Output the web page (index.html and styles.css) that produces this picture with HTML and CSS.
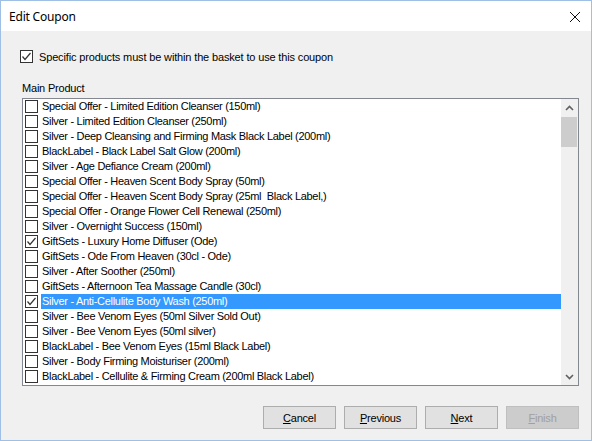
FILE: index.html
```html
<!DOCTYPE html>
<html>
<head>
<meta charset="utf-8">
<link rel="stylesheet" href="styles.css">
</head>
<body>
<div class="window">
  <div class="titlebar">
    <span class="title">Edit Coupon</span>
    <svg class="close" width="12" height="12" viewBox="0 0 12 12"><path d="M1 1 L11 11 M11 1 L1 11" stroke="#111" stroke-width="1" fill="none"/></svg>
  </div>
  <div class="content">
    <label class="topcheck">
      <span class="box checked"><svg width="11" height="11" viewBox="0 0 11 11"><polyline points="1.5,5.5 4,8.5 9.5,2" stroke="#333" stroke-width="1.2" fill="none"/></svg></span>
      <span>Specific products must be within the basket to use this coupon</span>
    </label>
    <div class="label">Main Product</div>
    <div class="listbox">
      <div class="items">
        <div class="row"><span class="box"></span><span class="txt">Special Offer - Limited Edition Cleanser (150ml)</span></div>
        <div class="row"><span class="box"></span><span class="txt">Silver - Limited Edition Cleanser (250ml)</span></div>
        <div class="row"><span class="box"></span><span class="txt">Silver - Deep Cleansing and Firming Mask Black Label (200ml)</span></div>
        <div class="row"><span class="box"></span><span class="txt">BlackLabel - Black Label Salt Glow (200ml)</span></div>
        <div class="row"><span class="box"></span><span class="txt">Silver - Age Defiance Cream (200ml)</span></div>
        <div class="row"><span class="box"></span><span class="txt">Special Offer - Heaven Scent Body Spray (50ml)</span></div>
        <div class="row"><span class="box"></span><span class="txt">Special Offer - Heaven Scent Body Spray (25ml&nbsp; Black Label,)</span></div>
        <div class="row"><span class="box"></span><span class="txt">Special Offer - Orange Flower Cell Renewal (250ml)</span></div>
        <div class="row"><span class="box"></span><span class="txt">Silver - Overnight Success (150ml)</span></div>
        <div class="row"><span class="box"><svg width="11" height="11" viewBox="0 0 11 11"><polyline points="1.5,5.5 4,8.5 9.5,2" stroke="#333" stroke-width="1.2" fill="none"/></svg></span><span class="txt">GiftSets - Luxury Home Diffuser (Ode)</span></div>
        <div class="row"><span class="box"></span><span class="txt">GiftSets - Ode From Heaven (30cl - Ode)</span></div>
        <div class="row"><span class="box"></span><span class="txt">Silver - After Soother (250ml)</span></div>
        <div class="row"><span class="box"></span><span class="txt">GiftSets - Afternoon Tea Massage Candle (30cl)</span></div>
        <div class="row selected"><span class="box"><svg width="11" height="11" viewBox="0 0 11 11"><polyline points="1.5,5.5 4,8.5 9.5,2" stroke="#333" stroke-width="1.2" fill="none"/></svg></span><span class="txt">Silver - Anti-Cellulite Body Wash (250ml)</span></div>
        <div class="row"><span class="box"></span><span class="txt">Silver - Bee Venom Eyes (50ml Silver Sold Out)</span></div>
        <div class="row"><span class="box"></span><span class="txt">Silver - Bee Venom Eyes (50ml silver)</span></div>
        <div class="row"><span class="box"></span><span class="txt">BlackLabel - Bee Venom Eyes (15ml Black Label)</span></div>
        <div class="row"><span class="box"></span><span class="txt">Silver - Body Firming Moisturiser (200ml)</span></div>
        <div class="row"><span class="box"></span><span class="txt">BlackLabel - Cellulite &amp; Firming Cream (200ml Black Label)</span></div>
      </div>
      <div class="scrollbar">
        <div class="arrow"><svg width="9" height="6" viewBox="0 0 9 6"><polyline points="1,5 4.5,1.5 8,5" stroke="#606060" stroke-width="1.6" fill="none"/></svg></div>
        <div class="thumb"></div>
        <div class="track"></div>
        <div class="arrow"><svg width="9" height="6" viewBox="0 0 9 6"><polyline points="1,1 4.5,4.5 8,1" stroke="#606060" stroke-width="1.6" fill="none"/></svg></div>
      </div>
    </div>
    <div class="buttons">
      <button class="btn"><u>C</u>ancel</button>
      <button class="btn"><u>P</u>revious</button>
      <button class="btn"><u>N</u>ext</button>
      <button class="btn disabled"><u>F</u>inish</button>
    </div>
  </div>
</div>
</body>
</html>
```
FILE: styles.css
```css
html, body {
  margin: 0;
  padding: 0;
}
body {
  width: 592px;
  height: 441px;
  font-family: "Liberation Sans", Arial, sans-serif;
  font-size: 11px;
  color: #000;
}
.window {
  width: 592px;
  height: 441px;
  box-sizing: border-box;
  border: 1px solid #9fc0e4;
  display: flex;
  flex-direction: column;
  background: #f0f0f0;
}
.titlebar {
  height: 30px;
  background: #fff;
  display: flex;
  align-items: center;
  justify-content: space-between;
  padding: 0 10px 0 8px;
}
.title {
  font-family: "Noto Sans", "Liberation Sans", sans-serif;
  font-size: 12px;
  letter-spacing: -0.2px;
  color: #000;
}
.close {
  display: block;
  margin-top: 1px;
}
.content {
  flex: 1;
  display: flex;
  flex-direction: column;
  padding: 19px 12px 0 21px;
}
.topcheck {
  display: flex;
  align-items: center;
  height: 13px;
  margin-left: -2px;
  gap: 6px;
  letter-spacing: -0.15px;
}
.box {
  width: 13px;
  height: 13px;
  box-sizing: border-box;
  border: 1px solid #333;
  background: #fff;
  display: flex;
  align-items: center;
  justify-content: center;
  flex: none;
  letter-spacing: 0;
}
.box svg {
  display: block;
}
.label {
  margin-top: 19px;
  height: 13px;
  line-height: 13px;
  letter-spacing: -0.2px;
}
.listbox {
  margin-top: 3px;
  height: 288px;
  box-sizing: border-box;
  border: 1px solid #828790;
  background: #fff;
  display: flex;
}
.items {
  flex: 1;
  display: flex;
  flex-direction: column;
  overflow: hidden;
}
.row {
  height: 15px;
  display: flex;
  align-items: center;
  padding-left: 2px;
  flex: none;
}
.row .txt {
  margin-left: 3px;
  padding-left: 1px;
  height: 15px;
  line-height: 15px;
  flex: 1;
  white-space: nowrap;
  letter-spacing: -0.3px;
}
.row.selected .txt {
  background: #3399ff;
  color: #fff;
}
.scrollbar {
  width: 17px;
  background: #f0f0f0;
  display: flex;
  flex-direction: column;
  flex: none;
}
.arrow {
  height: 17px;
  display: flex;
  align-items: center;
  justify-content: center;
  flex: none;
}
.arrow svg {
  display: block;
}
.thumb {
  height: 30px;
  margin: 1px 1px 0 0;
  background: #cdcdcd;
  flex: none;
}
.track {
  flex: 1;
}
.buttons {
  display: flex;
  justify-content: flex-end;
  gap: 8px;
  margin-top: 20px;
}
.btn {
  width: 73px;
  height: 23px;
  box-sizing: border-box;
  border: 1px solid #adadad;
  background: #e1e1e1;
  font-family: "Liberation Sans", Arial, sans-serif;
  font-size: 11px;
  letter-spacing: -0.2px;
  color: #000;
  padding: 0;
  margin: 0;
  border-radius: 0;
}
.btn.disabled {
  background: #cccccc;
  border-color: #bfbfbf;
  color: #a0a0a0;
}
```
